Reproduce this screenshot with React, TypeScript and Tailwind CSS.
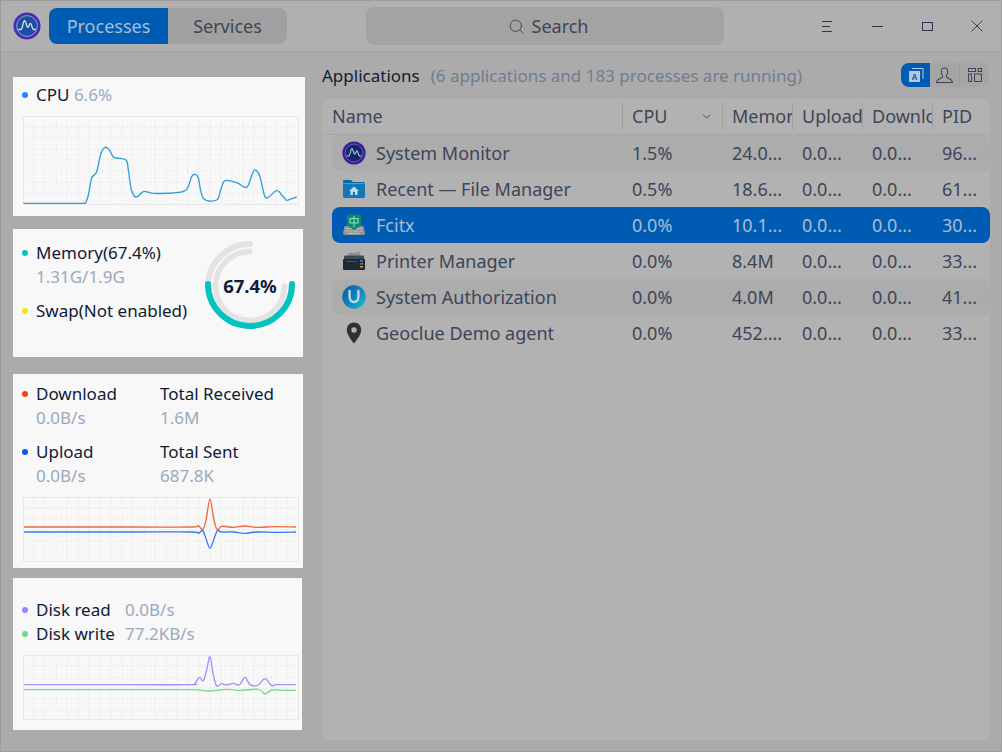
import { Search, ChevronDown } from 'lucide-react';

type Pt = [number, number];

// smooth line through points, coordinates are the chart's own viewBox
function smooth(pts: Pt[]) {
    let d = `M${pts[0][0]} ${pts[0][1]}`;
    for (let i = 0; i < pts.length - 1; i++) {
        const p0 = pts[i - 1] || pts[i];
        const p1 = pts[i];
        const p2 = pts[i + 1];
        const p3 = pts[i + 2] || p2;
        const c1x = p1[0] + (p2[0] - p0[0]) / 6;
        const c1y = p1[1] + (p2[1] - p0[1]) / 6;
        const c2x = p2[0] - (p3[0] - p1[0]) / 6;
        const c2y = p2[1] - (p3[1] - p1[1]) / 6;
        d += ` C${c1x} ${c1y} ${c2x} ${c2y} ${p2[0]} ${p2[1]}`;
    }
    return d;
}

const cpuLine: Pt[] = [[70, 610], [200, 610], [250, 610], [258, 606], [265, 585], [275, 535], [290, 515], [303, 460], [316, 442], [328, 450], [342, 472], [378, 480], [385, 510], [394, 570], [405, 590], [415, 588], [432, 574], [460, 580], [530, 578], [560, 568], [575, 530], [585, 523], [595, 535], [610, 595], [650, 600], [662, 570], [675, 542], [710, 548], [735, 562], [745, 555], [760, 515], [770, 512], [780, 530], [795, 590], [810, 588], [828, 572], [840, 578], [858, 600], [870, 598], [890, 591]];
const downLine: Pt[] = [[72, 470], [400, 470], [575, 470], [595, 466], [608, 478], [618, 450], [630, 386], [642, 450], [652, 478], [665, 468], [700, 471], [735, 467], [770, 471], [830, 469], [888, 470]];
const upLine: Pt[] = [[72, 485], [400, 485], [575, 485], [595, 489], [608, 481], [618, 505], [630, 534], [642, 505], [652, 481], [665, 485], [700, 485], [735, 489], [770, 485], [830, 486], [888, 485]];
const readLine: Pt[] = [[72, 344], [400, 344], [575, 344], [585, 340], [598, 322], [610, 332], [620, 300], [630, 260], [640, 315], [650, 348], [665, 341], [680, 345], [700, 340], [718, 345], [735, 322], [750, 344], [775, 345], [795, 326], [815, 347], [830, 344], [888, 344]];
const writeLine: Pt[] = [[72, 359], [400, 359], [575, 359], [625, 363], [680, 358], [720, 361], [775, 358], [795, 372], [815, 360], [850, 361], [888, 361]];

function Chart({ top, height, lines }: { top: number; height: number; lines: { pts: Pt[]; color: string }[] }) {
    const xs = Array.from({ length: 24 }, (_, i) => 102 + i * 33);
    const ys = Array.from({ length: Math.floor(height / 33) }, (_, i) => top + 33 + i * 33);
    return (
        <svg viewBox={`69 ${top} 828 ${height}`} width={276} height={height / 3} className="block">
            {xs.map((x) => (
                <line key={x} x1={x} x2={x} y1={top} y2={top + height} stroke="#e6e6e6" strokeWidth={2.5} strokeDasharray="7 7" />
            ))}
            {ys.map((y) => (
                <line key={y} x1={69} x2={897} y1={y} y2={y} stroke="#e6e6e6" strokeWidth={2.5} strokeDasharray="7 7" />
            ))}
            <rect x={70.5} y={top + 1.5} width={825} height={height - 3} fill="none" stroke="#e8e8e8" strokeWidth={3} />
            {lines.map((l) => (
                <path key={l.color} d={smooth(l.pts)} fill="none" stroke={l.color} strokeWidth={4} strokeLinejoin="round" />
            ))}
        </svg>
    );
}

function Legend({ dot, label, value, className = '' }: { dot: string; label: string; value?: string; className?: string }) {
    return (
        <div className={`relative pl-[23px] ${className}`}>
            <span className={`absolute left-[9px] top-[9px] h-[6px] w-[6px] rounded-full ${dot}`} />
            <div className="text-[#0e2036] leading-[24px]">{label}</div>
            {value && <div className="text-[#9aa9bd] leading-[24px]">{value}</div>}
        </div>
    );
}

function Gauge() {
    return (
        <div className="relative -mt-[1px] h-[92px] w-[92px] shrink-0">
            <svg viewBox="0 0 92 92" width={92} height={92}>
                <path d="M4 46 A42 42 0 0 1 46 4" fill="none" stroke="#e3e3e3" strokeWidth={6} strokeLinecap="round" />
                <path d="M46 11.5 A34.5 34.5 0 1 0 80.5 46" fill="none" stroke="#e3e3e3" strokeWidth={5.5} strokeLinecap="round" />
                <path d="M4 44 A42 42 0 0 0 88 44" fill="none" stroke="#00c4bd" strokeWidth={6} strokeLinecap="round" />
            </svg>
            <div className="absolute inset-0 flex items-center justify-center text-[18.5px] font-bold text-[#0e2036]">67.4%</div>
        </div>
    );
}

function MonitorIcon({ size = 24, bright = false }: { size?: number; bright?: boolean }) {
    return (
        <svg viewBox="0 0 24 24" width={size} height={size}>
            <circle cx="12" cy="12" r="11.6" fill={bright ? '#4a2bb0' : '#3b1f96'} />
            <circle cx="12" cy="12" r="8.9" fill={bright ? '#1c4f9e' : '#16246a'} stroke={bright ? '#9fb4e6' : '#7d6fd0'} strokeWidth="0.7" />
            <path d="M4.5 15 H6.8 C8.2 15 8.5 7.5 10 7.5 C11.3 7.5 11.4 13.2 12.6 13.2 C13.7 13.2 13.9 9.8 15 9.8 C16.1 9.8 16.2 15 17.6 15 H19.5" fill="none" stroke={bright ? '#d5e8f5' : '#a9d9ec'} strokeWidth="1.1" />
        </svg>
    );
}

function FolderIcon() {
    return (
        <svg viewBox="0 0 24 24" width={24} height={24}>
            <path d="M1 4 C1 3.4 1.4 3 2 3 H9 L11 5 H22 C22.6 5 23 5.4 23 6 V8 H1 Z" fill="#0a6aa5" />
            <path d="M1 7 H23 V19.5 C23 20.3 22.4 21 21.5 21 H2.5 C1.6 21 1 20.3 1 19.5 Z" fill="#1179b8" />
            <path d="M1 6.6 H23" stroke="#8fc0dc" strokeWidth="0.6" />
            <path d="M12 9.5 L17 14 H15.5 V18 H13 V15 H11 V18 H8.5 V14 H7 Z" fill="#bfdcec" />
        </svg>
    );
}

function FcitxIcon() {
    return (
        <svg viewBox="0 0 24 24" width={24} height={24}>
            <path d="M2.5 13 H21.5 L23 20 C23 21 22.5 22 21.5 22 H2.5 C1.5 22 1 21 1 20 Z" fill="#8f9296" />
            <path d="M3.5 15.5 H20.5 M3 18 H21 M6 20.3 H18" stroke="#c9c9c9" strokeWidth="1.2" strokeDasharray="1.8 0.7" />
            <path d="M5 1.5 H19 V12.5 L12 17 L5 12.5 Z" fill="#0c8a6e" />
            <path d="M8 5.5 H16 V10 H8 Z M12 3 V14" fill="none" stroke="#8fdcbc" strokeWidth="1.1" />
        </svg>
    );
}

function PrinterIcon() {
    return (
        <svg viewBox="0 0 24 24" width={24} height={24}>
            <path d="M6 7 L6.5 4 L16 3.5 L16.5 1.5 L17.5 3 L18 7 Z" fill="#8b8f96" />
            <path d="M2 8 C2 7 2.7 6.5 3.5 6.5 H20.5 C21.3 6.5 22 7 22 8 V12 H2 Z" fill="#3b4a56" />
            <rect x="1" y="10" width="22" height="11" rx="1" fill="#1b2a33" />
            <rect x="4" y="12" width="11" height="1" fill="#4a5862" />
            <rect x="18" y="11" width="3" height="1.6" fill="#3d86b8" />
            <rect x="18" y="14" width="3" height="1.6" fill="#c2563a" />
            <rect x="18" y="17" width="3" height="1.6" fill="#c89a3a" />
        </svg>
    );
}

function AuthIcon() {
    return (
        <svg viewBox="0 0 24 24" width={24} height={24}>
            <defs>
                <linearGradient id="auth-grad" x1="0.1" y1="0.1" x2="0.9" y2="0.9">
                    <stop offset="0" stopColor="#0a5fa8" />
                    <stop offset="0.55" stopColor="#0f87bb" />
                    <stop offset="1" stopColor="#18b7c8" />
                </linearGradient>
            </defs>
            <circle cx="12" cy="12" r="11.7" fill="url(#auth-grad)" />
            <path d="M7.6 6 V12 C7.6 15 9.5 17 12 17 C14.5 17 16.4 15 16.4 12 V6" fill="none" stroke="#bcd9e6" strokeWidth="2.4" strokeLinecap="round" />
        </svg>
    );
}

function PinIcon() {
    return (
        <svg viewBox="0 0 24 24" width={24} height={24}>
            <path fillRule="evenodd" d="M12 1.5 C7.8 1.5 4.8 4.7 4.8 8.8 C4.8 13.8 9.5 19.3 12 22.5 C14.5 19.3 19.2 13.8 19.2 8.8 C19.2 4.7 16.2 1.5 12 1.5 Z M12 6.3 A2.7 2.7 0 1 1 12 11.7 A2.7 2.7 0 1 1 12 6.3 Z" fill="#303136" />
        </svg>
    );
}

const rows = [
    { name: 'System Monitor', icon: <MonitorIcon />, cpu: '1.5%', mem: '24.0...', up: '0.0...', down: '0.0...', pid: '96...', bg: 'bg-[#acacac]' },
    { name: 'Recent — File Manager', icon: <FolderIcon />, cpu: '0.5%', mem: '18.6...', up: '0.0...', down: '0.0...', pid: '61...', bg: '' },
    { name: 'Fcitx', icon: <FcitxIcon />, cpu: '0.0%', mem: '10.1...', up: '0.0...', down: '0.0...', pid: '30...', bg: 'bg-[#005cb3] text-[#a9bdd3]' },
    { name: 'Printer Manager', icon: <PrinterIcon />, cpu: '0.0%', mem: '8.4M', up: '0.0...', down: '0.0...', pid: '33...', bg: '' },
    { name: 'System Authorization', icon: <AuthIcon />, cpu: '0.0%', mem: '4.0M', up: '0.0...', down: '0.0...', pid: '41...', bg: 'bg-[#acacac]' },
    { name: 'Geoclue Demo agent', icon: <PinIcon />, cpu: '0.0%', mem: '452....', up: '0.0...', down: '0.0...', pid: '33...', bg: '' },
];

const columns = 'grid grid-cols-[290px_100px_70px_70px_70px_58px]';

function HeaderCell({ label, first }: { label: string; first?: boolean }) {
    return (
        <div className={`relative flex h-full items-center overflow-hidden whitespace-nowrap ${first ? 'pl-0' : 'pl-[10px]'}`}>
            {label}
            {!first && <span className="absolute left-0 top-[4px] bottom-[4px] w-px bg-[#a0a0a0]" />}
        </div>
    );
}

export default function App() {
    return (
        <div className="flex h-[752px] w-[1002px] flex-col overflow-hidden border border-[#9c9c9c] bg-[#ababab] font-['Noto_Sans',sans-serif] text-[17px] text-[#3c4658]">
            <div className="flex h-[50px] shrink-0 items-center bg-[#b0b0b0] pl-[12px] text-[18px] shadow-[0_1px_2px_rgba(0,0,0,0.06)]">
                <MonitorIcon size={28} bright />
                <div className="ml-[8px] flex h-[36px] w-[238px] overflow-hidden rounded-lg bg-[#a0a0a0]">
                    <div className="flex w-[119px] items-center justify-center bg-[#005cb3] text-[#a9bdd3]">Processes</div>
                    <div className="flex w-[119px] items-center justify-center">Services</div>
                </div>
                <div className="ml-[79px] flex h-[38px] w-[358px] items-center justify-center gap-[7px] rounded-lg bg-[#a3a3a3] pl-[6px]">
                    <Search size={17} strokeWidth={1.3} />
                    Search
                </div>
                <div className="-mr-[1px] ml-auto flex items-center text-[#2e3648]">
                    <div className="flex w-[50px] justify-center">
                        <svg width="11" height="11" viewBox="0 0 11 11" fill="currentColor"><rect x="0" y="0" width="10" height="1" /><rect x="0" y="5" width="8" height="1" /><rect x="0" y="10" width="10" height="1" /></svg>
                    </div>
                    <div className="flex w-[50px] justify-center">
                        <svg width="11" height="1" viewBox="0 0 11 1" fill="currentColor"><rect width="11" height="1" /></svg>
                    </div>
                    <div className="flex w-[50px] justify-center">
                        <svg width="11" height="9" viewBox="0 0 11 9" fill="none" stroke="currentColor"><rect x="0.5" y="0.5" width="10" height="8" /></svg>
                    </div>
                    <div className="flex w-[50px] justify-center">
                        <svg width="12" height="12" viewBox="0 0 12 12" fill="none" stroke="currentColor" strokeWidth="0.9"><path d="M0.5 0.5 L11.5 11.5 M11.5 0.5 L0.5 11.5" /></svg>
                    </div>
                </div>
            </div>

            <div className="flex min-h-0 flex-1">
                <div className="w-[321px] shrink-0 pl-[12px]">
                    <div className="mt-[26px] h-[139px] w-[292px] bg-[#f8f8f8] pl-[10px] pt-[6px]">
                        <div className="relative pl-[13px] leading-[24px]">
                            <span className="absolute -left-[1px] top-[9px] h-[6px] w-[6px] rounded-full bg-[#1a8cff]" />
                            <span className="text-[#0e2036]">CPU</span> <span className="text-[#9aa9bd]">6.6%</span>
                        </div>
                        <div className="mt-[9px]">
                            <Chart top={348} height={267} lines={[{ pts: cpuLine, color: '#2a9fdc' }]} />
                        </div>
                    </div>

                    <div className="mt-[13px] flex h-[128px] w-[290px] items-start justify-between bg-[#f8f8f8] pr-[7px] pt-[12px]">
                        <div>
                            <Legend dot="bg-[#00c4bd]" label="Memory(67.4%)" value="1.31G/1.9G" />
                            <Legend dot="bg-[#ffdd1a]" label="Swap(Not enabled)" className="mt-[10px]" />
                        </div>
                        <Gauge />
                    </div>

                    <div className="mt-[17px] h-[194px] w-[290px] bg-[#f8f8f8] pt-[8px]">
                        <div className="grid grid-cols-[147px_1fr] gap-y-[10px]">
                            <Legend dot="bg-[#e8470f]" label="Download" value="0.0B/s" />
                            <div className="leading-[24px] text-[#0e2036]">Total Received<div className="text-[#9aa9bd]">1.6M</div></div>
                            <Legend dot="bg-[#0a55f0]" label="Upload" value="0.0B/s" />
                            <div className="leading-[24px] text-[#0e2036]">Total Sent<div className="text-[#9aa9bd]">687.8K</div></div>
                        </div>
                        <div className="mt-[9px] pl-[10px]">
                            <Chart top={380} height={195} lines={[{ pts: downLine, color: '#ea6a3c' }, { pts: upLine, color: '#3a78ee' }]} />
                        </div>
                    </div>

                    <div className="mt-[10px] h-[152px] w-[289px] bg-[#f8f8f8] pt-[20px]">
                        <div className="grid grid-cols-[112px_1fr] leading-[24px]">
                            <Legend dot="bg-[#8f88ff]" label="Disk read" />
                            <div className="text-[#9aa9bd]">0.0B/s</div>
                            <Legend dot="bg-[#6bdc85]" label="Disk write" />
                            <div className="text-[#9aa9bd]">77.2KB/s</div>
                        </div>
                        <div className="mt-[9px] pl-[10px]">
                            <Chart top={255} height={195} lines={[{ pts: readLine, color: '#9a94fb' }, { pts: writeLine, color: '#74d98c' }]} />
                        </div>
                    </div>
                </div>

                <div className="flex w-[668px] flex-col">
                    <div className="flex h-[48px] shrink-0 items-center justify-between">
                        <div className="mt-[2px] whitespace-nowrap">
                            <span className="text-[#0e2036]">Applications</span>
                            <span className="ml-[11px] text-[#6f7e8f]">(6 applications and 183 processes are running)</span>
                        </div>
                        <div className="mr-[1px] flex h-[24px] w-[88px] overflow-hidden rounded-lg bg-[#a5a5a5]">
                            <div className="flex w-[29px] items-center justify-center bg-[#005cb3]">
                                <svg viewBox="0 0 16 16" width={16} height={16}>
                                    <path d="M4 1.5 H15 V12" fill="none" stroke="#b6c8da" strokeWidth="1" />
                                    <rect x="1" y="4" width="11" height="11" fill="#b6c8da" />
                                    <text x="6.5" y="12.5" textAnchor="middle" fontSize="8" fontWeight="700" fill="#1a5fb0">A</text>
                                </svg>
                            </div>
                            <div className="flex w-[30px] items-center justify-center border-r border-[#9d9d9d]">
                                <svg viewBox="0 0 16 16" width={17} height={17} fill="none" stroke="#3c4658" strokeWidth="1">
                                    <path d="M8 1 C10 1 11 2.6 11 4.6 C11 6.8 10 8 9.5 8.8 C9.5 10.5 15.5 11 15.5 14.5 H0.5 C0.5 11 6.5 10.5 6.5 8.8 C6 8 5 6.8 5 4.6 C5 2.6 6 1 8 1 Z" />
                                </svg>
                            </div>
                            <div className="flex w-[29px] items-center justify-center">
                                <svg viewBox="0 0 16 16" width={16} height={16} fill="none" stroke="#3c4658" strokeWidth="1">
                                    <rect x="1.5" y="1.5" width="7" height="3" />
                                    <rect x="11" y="1.5" width="3.5" height="3" />
                                    <rect x="1.5" y="7" width="3" height="7.5" />
                                    <rect x="7.5" y="7" width="7" height="7.5" />
                                </svg>
                            </div>
                        </div>
                    </div>

                    <div className="mb-[11px] flex-1 rounded-lg bg-[#b2b2b2] text-[18px]">
                        <div className={`${columns} h-[36px] items-center border-b border-[#a5a5a5] pl-[10px]`}>
                            <HeaderCell label="Name" first />
                            <div className="relative flex h-full items-center pl-[10px]">
                                CPU
                                <ChevronDown size={13} strokeWidth={1.6} className="absolute right-[9px] text-[#2e3648]" />
                                <span className="absolute left-0 top-[4px] bottom-[4px] w-px bg-[#a0a0a0]" />
                            </div>
                            <HeaderCell label="Memory" />
                            <HeaderCell label="Upload" />
                            <HeaderCell label="Download" />
                            <HeaderCell label="PID" />
                        </div>
                        <div className="pl-[10px]">
                            {rows.map((r) => (
                                <div key={r.name} className={`${columns} h-[36px] items-center whitespace-nowrap rounded-lg ${r.bg}`}>
                                    <div className="flex items-center gap-[10px] pl-[10px]">
                                        {r.icon}
                                        <span>{r.name}</span>
                                    </div>
                                    <div className="pl-[10px]">{r.cpu}</div>
                                    <div className="pl-[10px]">{r.mem}</div>
                                    <div className="pl-[10px]">{r.up}</div>
                                    <div className="pl-[10px]">{r.down}</div>
                                    <div className="pl-[10px]">{r.pid}</div>
                                </div>
                            ))}
                        </div>
                    </div>
                </div>
            </div>
        </div>
    );
}
